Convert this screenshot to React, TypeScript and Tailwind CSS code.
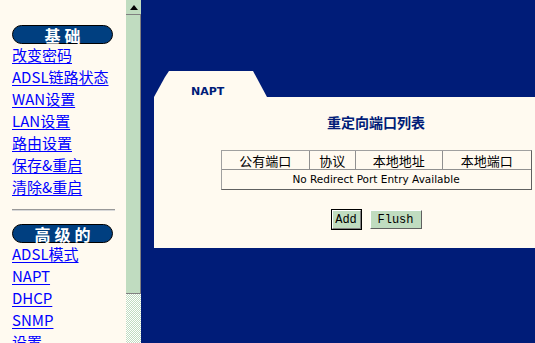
import React from "react";

const basic = ["改变密码", "ADSL链路状态", "WAN设置", "LAN设置", "路由设置", "保存&重启", "清除&重启"];
const advanced = ["ADSL模式", "NAPT", "DHCP", "SNMP", "设置", "IP路由"];
const headers = [
  { label: "公有端口", w: "w-[89px]" },
  { label: "协议", w: "w-[46px]" },
  { label: "本地地址", w: "w-[88px]" },
  { label: "本地端口", w: "w-[88px]" },
];

function Pill({ text }: { text: string }) {
  return (
    <div className="w-[101px] h-[19px] rounded-full bg-[#003f80] border border-black flex items-center justify-center text-white font-bold text-[16px] tracking-[4px] leading-none pl-[4px] font-['Noto_Sans_CJK_SC',sans-serif]">
      {text}
    </div>
  );
}

function MenuLinks({ items }: { items: string[] }) {
  return (
    <div className="flex flex-col">
      {items.map((t) => (
        <a
          key={t}
          href="#"
          className="block h-[22px] leading-[22px] text-[15px] text-[#0000ff] underline underline-offset-[2px] whitespace-nowrap font-['Noto_Sans_CJK_SC',sans-serif]"
        >
          {t}
        </a>
      ))}
    </div>
  );
}

function Scrollbar() {
  return (
    <div className="w-[15px] h-full flex flex-col shrink-0">
      <div className="h-[15px] bg-[#c0dcc0] border-b border-[#808080] flex items-center justify-center">
        <svg width="8" height="5" viewBox="0 0 8 5">
          <path d="M4 0 L8 5 L0 5 Z" fill="#000" />
        </svg>
      </div>
      <div className="h-[279px] bg-[#c0dcc0] border-r border-b border-[#808080]" />
      <div className="flex-1 bg-[image:repeating-conic-gradient(#c0dcc0_0%_25%,#ffffff_0%_50%)] bg-[length:2px_2px]" />
    </div>
  );
}

export default function App() {
  return (
    <div className="flex w-[535px] h-[343px] overflow-hidden">
      <div className="w-[126px] h-full shrink-0 overflow-hidden bg-[#fffaf0] pl-[12px] pt-[25px]">
        <Pill text="基础" />
        <MenuLinks items={basic} />
        <div className="w-[103px] mt-[11px] mb-[13px] border-t border-[#999999] border-b border-b-[#d8d8d8]" />
        <Pill text="高级的" />
        <MenuLinks items={advanced} />
      </div>
      <Scrollbar />
      <div className="flex-1 h-full overflow-hidden bg-[#001c78] pt-[71px] pl-[13px]">
        <div className="w-[444px]">
          <div className="h-[26px] w-[113px] bg-[#fffaf0] [clip-path:polygon(0_100%,11px_6px,15px_0,99px_0,113px_100%)] pl-[37px] pt-[6px]">
            <span className="text-[11px] leading-[13px] font-bold text-[#001c78] font-['DejaVu_Sans',sans-serif]">NAPT</span>
          </div>
          <div className="h-[151px] bg-[#fffaf0] flex flex-col items-center pt-[17px]">
            <div className="text-[14px] leading-[16px] font-bold text-[#001c78] font-['Noto_Sans_CJK_SC',sans-serif]">
              重定向端口列表
            </div>
            <div className="mt-[20px] w-[311px] border-t border-l border-[#a0a0a0] border-r border-b border-r-[#606060] border-b-[#606060]">
              <div className="flex h-[19px] border-b border-[#909090]">
                {headers.map((h, i) => (
                  <div
                    key={h.label}
                    className={`${h.w} ${i < 3 ? "border-r border-[#909090]" : ""} flex items-center justify-center text-[13px] leading-none text-black font-['Noto_Sans_CJK_SC',sans-serif]`}
                  >
                    {h.label}
                  </div>
                ))}
              </div>
              <div className="h-[19px] flex items-center justify-center text-[10.5px] text-black font-['DejaVu_Sans',sans-serif]">
                No Redirect Port Entry Available
              </div>
            </div>
            <div className="mt-[19px] flex items-start gap-[8px]">
              <button className="w-[31px] h-[21px] border border-black bg-[#c0dcc0] p-0">
                <div className="w-full h-full border-t border-l border-white border-r border-b border-r-[#808080] border-b-[#808080] flex items-center justify-center text-[12px] leading-none text-black font-['Liberation_Mono',monospace]">
                  Add
                </div>
              </button>
              <button className="w-[52px] h-[19px] mt-[1px] bg-[#c0dcc0] border-t border-l border-white border-r border-b border-r-[#606060] border-b-[#606060] flex items-center justify-center text-[12px] leading-none text-black font-['Liberation_Mono',monospace]">
                Flush
              </button>
            </div>
          </div>
        </div>
      </div>
    </div>
  );
}
